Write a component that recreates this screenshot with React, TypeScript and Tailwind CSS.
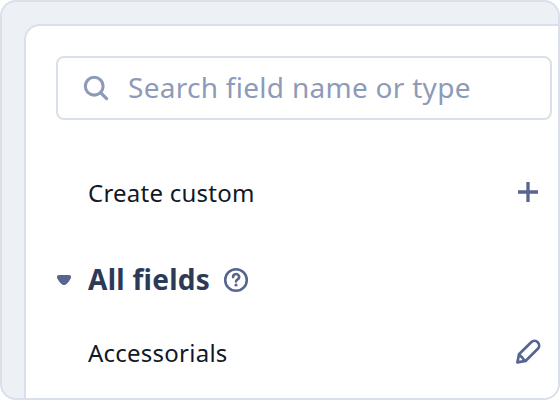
import { ReactNode, useState } from 'react';

function SearchIcon() {
  return (
    <svg width="28" height="28" viewBox="0 0 28 28" fill="none" className="shrink-0 text-[#8d9bb9]">
      <circle cx="12.2" cy="12.2" r="8.9" stroke="currentColor" strokeWidth="3.1" />
      <path d="M18.8 18.9L24.6 24.6" stroke="currentColor" strokeWidth="3.3" strokeLinecap="round" />
    </svg>
  );
}

function PlusIcon() {
  return (
    <svg width="24" height="24" viewBox="0 0 24 24" fill="none" stroke="currentColor" strokeWidth="3.3">
      <path d="M12 2V22M2 12H22" />
    </svg>
  );
}

function PencilIcon() {
  return (
    <svg
      width="28"
      height="28"
      viewBox="0 0 28 28"
      fill="none"
      stroke="currentColor"
      strokeWidth="2.7"
      strokeLinejoin="round"
      strokeLinecap="round"
    >
      <path d="M3.4 24.4L5 16.2L17.2 4.3A4.6 4.6 0 0 1 23.8 10.8L11.8 22.8Z" />
      <path d="M5.4 16.6C6.2 18.6 7.4 18.2 8.2 19.4C9 20.6 9.4 22 11.4 22.6" />
    </svg>
  );
}

function HelpIcon() {
  return (
    <svg width="26" height="26" viewBox="0 0 26 26" fill="none" stroke="currentColor" strokeLinecap="round">
      <circle cx="13" cy="13" r="10.8" strokeWidth="2.6" />
      <path d="M10.1 10.2A3 2.8 0 1 1 14.6 12.3C13.5 12.9 13 13.4 13 14.4" strokeWidth="2.6" />
      <circle cx="13" cy="18" r="1.6" fill="currentColor" stroke="none" />
    </svg>
  );
}

function CaretIcon({ open }: { open: boolean }) {
  return (
    <svg width="16" height="12" viewBox="0 0 16 12" fill="currentColor" className={open ? '' : '-rotate-90'}>
      <path d="M3 0.9H13C14.6 0.9 15.3 2 15 3.4C14.6 5.2 11.8 8.9 9.8 10.5C8.7 11.3 7.3 11.3 6.2 10.5C4.2 8.9 1.4 5.2 1 3.4C0.7 2 1.4 0.9 3 0.9Z" />
    </svg>
  );
}

interface FieldRowProps {
  label: string;
  action: string;
  icon: ReactNode;
}

function FieldRow({ label, action, icon }: FieldRowProps) {
  return (
    <div className="flex h-12 items-center justify-between pl-8 text-2xl tracking-[0.01em] text-[#111827]">
      <span className="pt-0.5">{label}</span>
      <button aria-label={action} className="flex w-12 justify-center text-[#566690]">
        {icon}
      </button>
    </div>
  );
}

export default function App() {
  const [query, setQuery] = useState('');
  const [open, setOpen] = useState(true);

  return (
    <div className="flex h-[400px] w-[560px] overflow-hidden rounded-2xl border-2 border-[#d9e0e9] bg-[#edf0f5] pt-[22px] pl-[22px] font-['Noto_Sans',sans-serif]">
      <div className="flex-1 rounded-tl-2xl border-t-2 border-l-2 border-[#d9e0e9] bg-white pt-[30px] pr-1.5 pl-[30px]">
        {/* Search */}
        <label className="flex h-16 items-center gap-[18px] rounded-lg border-2 border-[#d9e0e9] pl-6">
          <SearchIcon />
          <input
            value={query}
            onChange={(e) => setQuery(e.target.value)}
            placeholder="Search field name or type"
            className="min-w-0 flex-1 bg-transparent pb-0.5 text-[28px] leading-10 tracking-[0.01em] outline-none placeholder:text-[#8d9bb9]"
          />
        </label>

        <div className="mt-12">
          <FieldRow label="Create custom" action="Create custom field" icon={<PlusIcon />} />
        </div>

        {/* Field group */}
        <div className="mt-10 flex h-12 items-center text-[#566690]">
          <button aria-label="Toggle all fields" onClick={() => setOpen(!open)} className="w-8">
            <CaretIcon open={open} />
          </button>
          <h2 className="pb-0.5 text-[28px] font-bold tracking-[0.01em] text-[#2d3a56]">All fields</h2>
          <span className="ml-[13px]">
            <HelpIcon />
          </span>
        </div>

        {open && (
          <div className="mt-6">
            <FieldRow label="Accessorials" action="Edit Accessorials" icon={<PencilIcon />} />
          </div>
        )}
      </div>
    </div>
  );
}
